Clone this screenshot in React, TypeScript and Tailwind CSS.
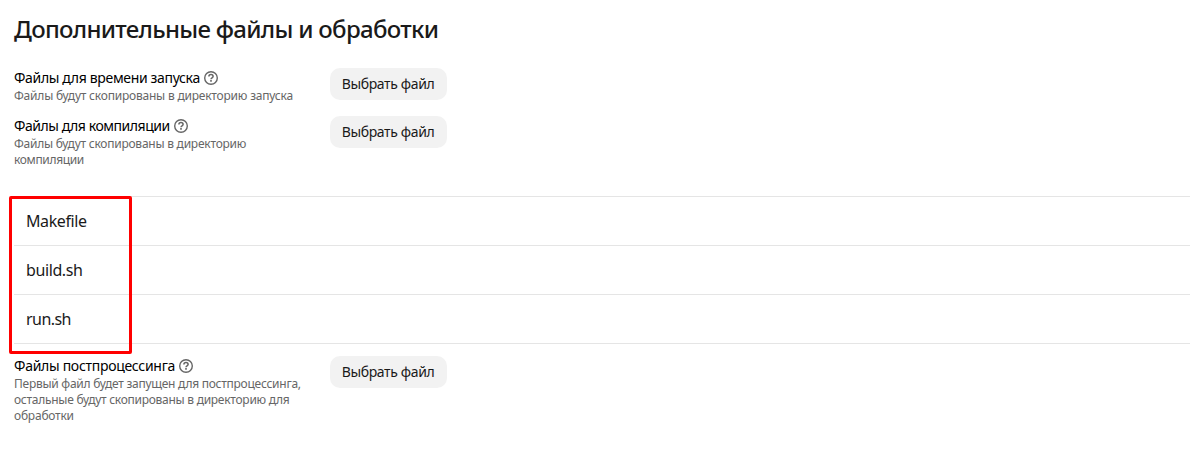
type Line = { text: string; tracking: string };

function Help() {
  return (
    <svg className="h-[14px] w-[14px] shrink-0" viewBox="0 0 14 14" fill="none" stroke="#666" strokeWidth="1.4">
      <circle cx="7" cy="7" r="6.3" />
      <path d="M4.9 5.6C4.9 4.3 5.7 3.6 7 3.6s2.1.7 2.1 1.8c0 1.4-2.1 1.4-2.1 2.8" strokeWidth="1.5" />
      <path d="M7 9.1v1.6" strokeWidth="1.6" />
    </svg>
  );
}

function Row({ title, lines }: { title: Line; lines: Line[] }) {
  return (
    <div className="flex items-start">
      <div className="w-[316px] shrink-0">
        <div className="flex h-5 items-center gap-1">
          <span className={`whitespace-nowrap text-[14px] leading-5 text-black ${title.tracking}`}>{title.text}</span>
          <Help />
        </div>
        {lines.map((line) => (
          <div key={line.text} className={`h-4 whitespace-nowrap text-[12px] leading-4 text-[#666] ${line.tracking}`}>
            {line.text}
          </div>
        ))}
      </div>
      <button className="h-8 w-[117px] rounded-[10px] bg-[#f2f2f2] pr-px text-[14px] leading-8 tracking-[-0.36px]">
        Выбрать файл
      </button>
    </div>
  );
}

const files: Line[] = [
  { text: 'Makefile', tracking: 'tracking-[-0.4px]' },
  { text: 'build.sh', tracking: 'tracking-[-0.4px]' },
  { text: 'run.sh', tracking: 'tracking-[-0.55px]' },
];

export default function App() {
  return (
    <div className="h-[460px] w-[1190px] overflow-hidden bg-white pl-[14px] pt-[14px] font-['Noto_Sans',sans-serif] text-[#1a1a1a]">
      <h1 className="h-8 whitespace-nowrap text-[24px] font-medium leading-[30px] tracking-[-0.7px]">
        Дополнительные файлы и обработки
      </h1>
      <div className="mt-[22px] h-12">
        <Row
          title={{ text: 'Файлы для времени запуска', tracking: 'tracking-[-0.34px]' }}
          lines={[{ text: 'Файлы будут скопированы в директорию запуска', tracking: 'tracking-[-0.21px]' }]}
        />
      </div>
      <div className="h-20">
        <Row
          title={{ text: 'Файлы для компиляции', tracking: 'tracking-[-0.45px]' }}
          lines={[
            { text: 'Файлы будут скопированы в директорию', tracking: 'tracking-[-0.24px]' },
            { text: 'компиляции', tracking: 'tracking-[-0.35px]' },
          ]}
        />
      </div>
      <div className="relative border-t border-[#e5e5e5]">
        {files.map((f) => (
          <div
            key={f.text}
            className={`flex h-[49px] items-center border-b border-[#e5e5e5] pl-3 text-[16px] ${f.tracking}`}
          >
            {f.text}
          </div>
        ))}
        <div className="absolute -left-[5px] -top-px h-[158px] w-[123px] rounded-[2px] border-3 border-[#f00]" />
      </div>
      <div className="mt-3">
        <Row
          title={{ text: 'Файлы постпроцессинга', tracking: 'tracking-[-0.29px]' }}
          lines={[
            { text: 'Первый файл будет запущен для постпроцессинга,', tracking: 'tracking-[-0.26px]' },
            { text: 'остальные будут скопированы в директорию для', tracking: 'tracking-[-0.27px]' },
            { text: 'обработки', tracking: 'tracking-[-0.22px]' },
          ]}
        />
      </div>
    </div>
  );
}
